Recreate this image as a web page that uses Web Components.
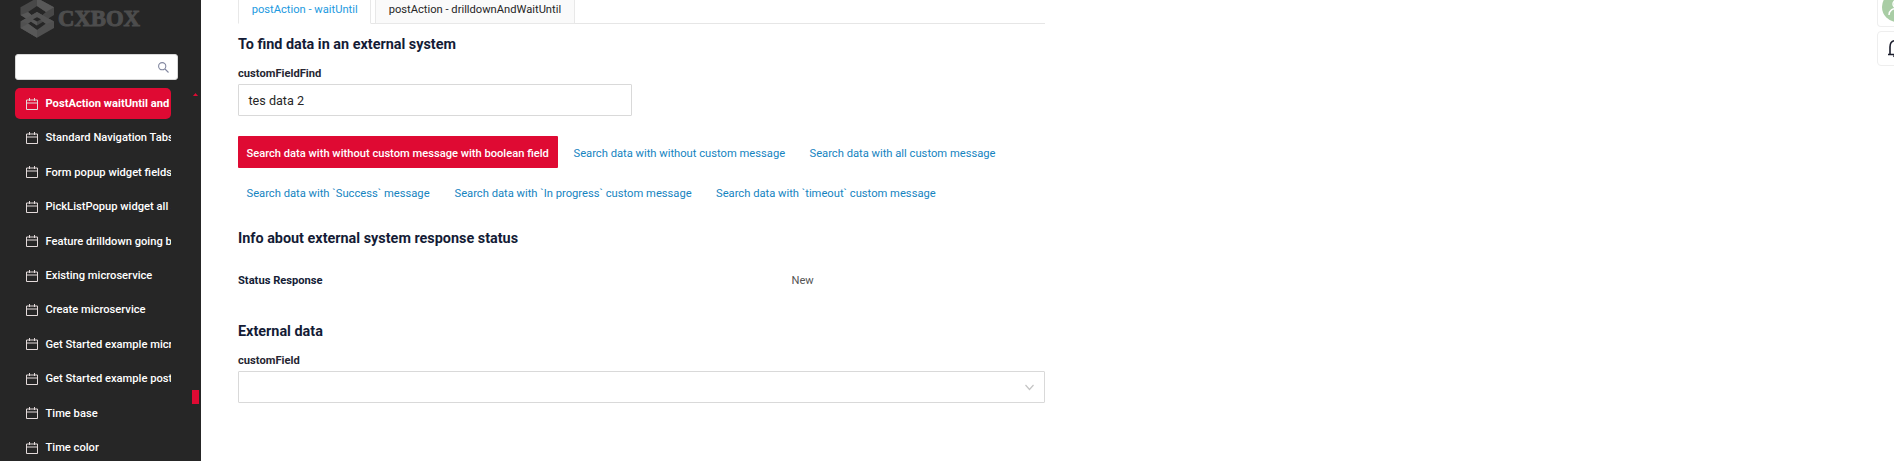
<!DOCTYPE html>
<html lang="en">
<head>
<meta charset="utf-8">
<title>CXBOX</title>
<style>
html,body{margin:0;height:100%;overflow:hidden;background:#fff}
body{font:11.17px/20px Roboto,sans-serif;color:#262626}
</style>
</head>
<body>
<cx-app>
  <cx-sidebar slot="side">
    <cx-menu-item active>PostAction waitUntil and</cx-menu-item>
    <cx-menu-item>Standard Navigation Tabs</cx-menu-item>
    <cx-menu-item>Form popup widget fields</cx-menu-item>
    <cx-menu-item>PickListPopup widget all s</cx-menu-item>
    <cx-menu-item>Feature drilldown going b</cx-menu-item>
    <cx-menu-item>Existing microservice</cx-menu-item>
    <cx-menu-item>Create microservice</cx-menu-item>
    <cx-menu-item>Get Started example micr</cx-menu-item>
    <cx-menu-item>Get Started example post</cx-menu-item>
    <cx-menu-item>Time base</cx-menu-item>
    <cx-menu-item>Time color</cx-menu-item>
  </cx-sidebar>
  <cx-tabs>
    <cx-tab active style="width:133px">postAction - waitUntil</cx-tab>
    <cx-tab style="width:200px">postAction - drilldownAndWaitUntil</cx-tab>
  </cx-tabs>
  <cx-title style="margin-top:10px">To find data in an external system</cx-title>
  <cx-field label="customFieldFind" style="margin-top:9px;width:394px">tes data 2</cx-field>
  <cx-actions style="margin-top:20px">
    <cx-button primary style="width:320px">Search data with without custom message with boolean field</cx-button>
    <cx-button style="width:229px">Search data with without custom message</cx-button>
    <cx-button>Search data with all custom message</cx-button>
  </cx-actions>
  <cx-actions style="margin-top:8px">
    <cx-button style="width:201px">Search data with `Success` message</cx-button>
    <cx-button style="width:254.500px">Search data with `In progress` custom message</cx-button>
    <cx-button>Search data with `timeout` custom message</cx-button>
  </cx-actions>
  <cx-title style="margin-top:20px">Info about external system response status</cx-title>
  <cx-info label="Status Response" style="margin-top:22px">New</cx-info>
  <cx-title style="margin-top:31px">External data</cx-title>
  <cx-field label="customField" select style="margin-top:9px"></cx-field>
  <cx-tools slot="tools"></cx-tools>
</cx-app>
<script>
const define = (name, html, setup) => customElements.define(name, class extends HTMLElement {
  constructor() {
    super();
    const t = document.createElement('template');
    t.innerHTML = html;
    this.attachShadow({mode: 'open'}).append(t.content.cloneNode(true));
    if (setup) setup(this, this.shadowRoot);
  }
});

define('cx-app', `<style>
:host{display:grid;grid-template-columns:201px 844px 1fr;height:461px;overflow:hidden}
main{padding-left:37px;min-width:0}
.tools{display:flex;justify-content:flex-end}
</style><slot name="side"></slot><main><slot></slot></main><div class="tools"><slot name="tools"></slot></div>`);

define('cx-sidebar', `<style>
:host{display:grid;grid-template-columns:171px 30px;background:#262626;height:461px;overflow:hidden;box-sizing:border-box}
.col{padding-left:15px}
.logo{display:block;width:130px;height:40px;margin-left:5px}
.search{box-sizing:border-box;display:flex;align-items:center;justify-content:flex-end;width:163px;height:26px;margin:14px 0 8.1px;padding-right:8px;background:#fff;border:1px solid #d9d9d9;border-radius:3px}
.rail{display:flex;flex-direction:column;align-items:flex-end;box-sizing:border-box;padding:93px 2px 0 0}
.up{width:5px;height:3px;margin-right:1px;background:#df0a33;clip-path:polygon(50% 0,100% 100%,0 100%)}
.thumb{width:7px;height:14px;margin-top:294px;background:#df0a33}
</style>
<div class="col">
<svg class="logo" viewBox="0 0 130 40">
 <g fill-rule="evenodd">
 <path fill="#505050" d="M17 12 34 21.500V28L17 37.800.5 28v-6.500zM17 17.500 8 23.500 17 30 26 23.500z"/>
 <path fill="#484848" d="M17-2 34 7.300V15L17 25.500.5 15V7.300zM17 6 8 12l9 7.500 9-7.500z"/>
 <path fill="#585858" d="M17-2v8l9 6 8-4.700zM.5 28 17 37.800V30L8 23.500zM.5 15 17 25.500v-6L8 12z"/>
 <path fill="#545454" d="M17 12 34 21.500 26 24 17 17.500 8 23.500.5 21.500z"/>
 <path fill="#262626" d="M17 17.200 21 19.200 17 21.400 13 19.200z"/></g>
 <text x="38" y="26" textLength="82" lengthAdjust="spacingAndGlyphs" font-family="Liberation Serif,serif" font-weight="700" font-size="22.500" fill="#4d4d4d" stroke="#4d4d4d" stroke-width="1">CXBOX</text>
</svg>
<div class="search"><svg width="11" height="11" viewBox="0 0 11 11" fill="none" stroke="#8388a0" stroke-width="1.100"><circle cx="4.200" cy="4.200" r="3.600"/><path d="m7 7 3.500 3.500"/></svg></div>
<slot></slot></div>
<div class="rail"><div class="up"></div><div class="thumb"></div></div>`);

define('cx-menu-item', `<style>
:host{display:flex;align-items:center;box-sizing:border-box;width:156px;height:31px;margin-bottom:3.4px;padding-left:11px;border-radius:5px;overflow:hidden;white-space:nowrap;color:#fff;font-weight:500;line-height:31px}
:host([active]){background:#df0a33;font-weight:700}
svg{flex:none;margin-right:7.5px}
</style><svg width="12" height="12" viewBox="0 0 12 12" fill="none" stroke="#e3dada"><path d="M.5 2h11v9.500H.5zM.5 5h11M3.500 0v3M8.500 0v3"/></svg><span><slot></slot></span>`);

define('cx-tabs', `<style>
:host{display:flex;gap:4px;box-sizing:border-box;width:807px;height:24px;background:linear-gradient(#e6e6e6,#e6e6e6) 0 23px/100% 1px no-repeat}
</style><slot></slot>`);
define('cx-tab', `<style>
:host{box-sizing:border-box;height:24px;padding:0 0 0 12.7px;border:solid #e8e8e8;border-width:0 1px 1px;background:#fafafa;line-height:19px;white-space:nowrap}
:host([active]){height:24px;border-bottom-color:#fff;background:#fff;color:#1c9ae0}
</style><slot></slot>`);

define('cx-title', `<style>
:host{display:block;height:20px;font-size:14.4px;line-height:22px;font-weight:700;color:#141c36;white-space:nowrap}
</style><slot></slot>`);

define('cx-field', `<style>
:host{display:block;width:807px}
label{display:block;height:20px;line-height:22px;font-weight:700;color:#262632}
.box{box-sizing:border-box;display:flex;align-items:center;justify-content:space-between;height:32px;margin-top:1px;padding:0 10px 0 9.5px;border:1px solid #d9d9d9;border-radius:1px;font-size:12.6px}
span{line-height:20px;padding-top:1px}
svg{display:none}:host([select]) svg{display:block}
</style><label></label><div class="box"><span><slot></slot></span><svg width="9" height="7" viewBox="0 0 9 7" fill="none" stroke="#c4c4c4" stroke-width="1.200"><path d="m.5 1 4 4.500 4-4.500"/></svg></div>`,
(el, root) => root.querySelector('label').textContent = el.getAttribute('label'));

define('cx-actions', `<style>:host{display:flex;gap:7px;height:32px}</style><slot></slot>`);
define('cx-button', `<style>
:host{box-sizing:border-box;height:32px;padding-left:8.500px;line-height:35px;color:#1584bf;white-space:nowrap;font-size:11.2px}
:host([primary]){background:#df0a33;color:#fff;font-weight:500;border-radius:1px;font-size:11.15px}
</style><slot></slot>`);

define('cx-info', `<style>
:host{display:grid;grid-template-columns:553.5px 1fr;height:20px;line-height:22px;color:#555}
b{color:#141c36}
</style><b></b><span><slot></slot></span>`,
(el, root) => root.querySelector('b').textContent = el.getAttribute('label'));

define('cx-tools', `<style>
:host{display:block;width:17px;overflow:hidden}
div{box-sizing:border-box;width:36px;border:1px solid #eee;border-radius:4px;height:35px}
.user{height:27px;border-top:0;border-top-left-radius:0;margin-bottom:4px}
svg{display:block}
</style>
<div class="user"><svg width="34" height="26" viewBox="1 0 34 26" fill="none"><circle cx="20" cy="7" r="15" fill="#a9cda5"/><circle cx="20" cy="4" r="4" stroke="#fff" stroke-width="1.500"/><path d="M12 15c0-9 16-9 16 0" stroke="#fff" stroke-width="1.500"/></svg></div>
<div><svg width="34" height="33" viewBox="1 1 34 33" fill="none" stroke="#1b1d2c" stroke-width="1.600"><path d="M11 23.500h17M13 23.500V16q0-6.500 6-6.500t6 6.500v7.500M16.500 24.500q3 4 6 0M19 7v2"/></svg></div>`);
</script>
</body>
</html>
